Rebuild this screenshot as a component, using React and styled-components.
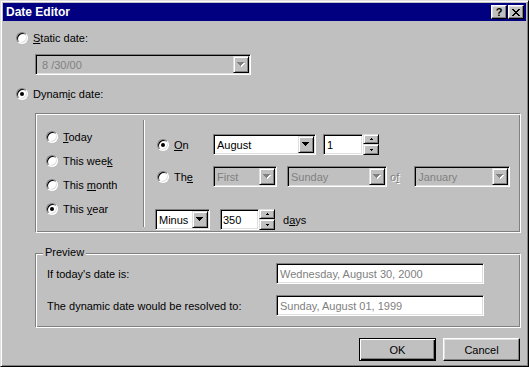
import React from 'react';
import styled, { createGlobalStyle, css } from 'styled-components';

const GlobalStyle = createGlobalStyle`
  html, body { margin: 0; padding: 0; background: #c0c0c0; }
  body {
    font-family: "Liberation Sans", Arial, sans-serif;
    font-size: 11px;
    color: #000;
  }
  * { box-sizing: border-box; }
`;

const raised = css`
  background: #c0c0c0;
  border: 1px solid;
  border-color: #dfdfdf #000 #000 #dfdfdf;
  box-shadow: inset 1px 1px 0 #fff, inset -1px -1px 0 #808080;
`;

const sunken = css`
  border: 1px solid;
  border-color: #808080 #fff #fff #808080;
  box-shadow: inset 1px 1px 0 #000, inset -1px -1px 0 #dfdfdf;
`;

const Window = styled.div`
  width: 529px;
  height: 367px;
  background: #c0c0c0;
  border: 1px solid;
  border-color: #dfdfdf #000 #000 #dfdfdf;
  box-shadow: inset 1px 1px 0 #fff, inset -1px -1px 0 #808080;
  padding: 2px;
  display: flex;
  flex-direction: column;
`;

const TitleBar = styled.div`
  height: 18px;
  background: #000080;
  display: flex;
  align-items: center;
  justify-content: space-between;
  padding: 0 2px 0 3px;
`;

const TitleText = styled.span`
  color: #fff;
  font-weight: bold;
  font-size: 12px;
`;

const CaptionButtons = styled.div`
  display: flex;
  gap: 1px;
`;

const CaptionButton = styled.div`
  width: 16px;
  height: 14px;
  background: #c0c0c0;
  border: 1px solid;
  border-color: #fff #000 #000 #fff;
  box-shadow: inset -1px -1px 0 #808080, inset 1px 1px 0 #dfdfdf;
  display: flex;
  align-items: center;
  justify-content: center;
  font-weight: bold;
  font-size: 11px;
  line-height: 1;
`;

const Body = styled.div`
  display: flex;
  flex-direction: column;
  padding: 0 6px 0 13px;
`;

const RadioRow = styled.div`
  display: flex;
  align-items: center;
  gap: 5px;
  height: ${p => p.$h || 14}px;
  margin-top: ${p => p.$top || 0}px;
  margin-left: ${p => p.$left || 0}px;
  width: ${p => (p.$w ? `${p.$w}px` : 'auto')};
  flex-shrink: 0;
`;

const RadioDot = styled.span`
  position: relative;
  width: 12px;
  height: 12px;
  border-radius: 50%;
  background: #fff;
  border: 1px solid;
  border-color: #808080 #fff #fff #808080;
  box-shadow: inset 1px 1px 0 #000, inset -1px -1px 0 #dfdfdf;
  flex-shrink: 0;
  &::after {
    content: '';
    display: ${p => (p.$checked ? 'block' : 'none')};
    position: absolute;
    left: 3px;
    top: 3px;
    width: 4px;
    height: 4px;
    border-radius: 50%;
    background: #000;
  }
`;

const Label = styled.span`
  white-space: nowrap;
  margin-left: ${p => p.$left || 0}px;
`;

const DimText = styled.span`
  color: #808080;
  text-shadow: 1px 1px 0 #fff;
  margin: 0 ${p => p.$right || 0}px 0 ${p => p.$left || 0}px;
`;

const Field = styled.div`
  display: flex;
  align-items: center;
  width: ${p => p.$w}px;
  height: 21px;
  flex-shrink: 0;
  margin-top: ${p => p.$top || 0}px;
  margin-left: ${p => p.$left || 0}px;
  background: ${p => (p.$disabled ? '#c0c0c0' : '#fff')};
  color: ${p => (p.$dim ? '#808080' : '#000')};
  ${sunken};
  padding: 1px 1px 1px ${p => p.$pad ?? 3}px;
`;

const FieldText = styled.span`
  flex: 1;
  white-space: nowrap;
  overflow: hidden;
`;

const DropButton = styled.div`
  width: 16px;
  height: 17px;
  ${raised};
  display: flex;
  align-items: center;
  justify-content: center;
  flex-shrink: 0;
`;

const SpinBox = styled.div`
  display: flex;
  flex-shrink: 0;
  margin-left: ${p => p.$left || 0}px;
`;

const Spinner = styled.div`
  display: flex;
  flex-direction: column;
  width: 16px;
  height: 21px;
`;

const SpinButton = styled.div`
  ${raised};
  height: ${p => p.$h}px;
  display: flex;
  align-items: center;
  justify-content: center;
`;

const Group = styled.div`
  position: relative;
  display: flex;
  flex-direction: ${p => p.$dir || 'column'};
  width: 486px;
  height: ${p => p.$h}px;
  margin: ${p => p.$top}px 0 0 19px;
  flex-shrink: 0;
  border: 1px solid;
  border-color: #808080 #fff #fff #808080;
  box-shadow: inset 1px 1px 0 #fff, inset -1px -1px 0 #808080;
`;

const Legend = styled.span`
  position: absolute;
  top: -8px;
  left: 7px;
  padding: 0 2px;
  line-height: 13px;
  background: #c0c0c0;
`;

const LeftCol = styled.div`
  width: 107px;
  padding: 11px 0 0 10px;
  display: flex;
  flex-direction: column;
`;

const Separator = styled.div`
  width: 2px;
  margin: 6px 0 5px;
  border-left: 1px solid #808080;
  border-right: 1px solid #fff;
`;

const RightCol = styled.div`
  flex: 1;
  padding: 20px 0 0 10px;
  display: flex;
  flex-direction: column;
`;

const OptionRow = styled.div`
  display: flex;
  align-items: center;
  height: 21px;
  margin-top: ${p => p.$top || 0}px;
`;

const PreviewRow = styled.div`
  display: flex;
  align-items: center;
  height: 21px;
  margin: ${p => p.$top}px 0 0 11px;
`;

const PreviewLabel = styled.span`
  width: 229px;
  white-space: nowrap;
`;

const ButtonRow = styled.div`
  display: flex;
  justify-content: flex-end;
  gap: 7px;
  margin-top: 10px;
`;

const PushButton = styled.div`
  width: 77px;
  height: 23px;
  display: flex;
  align-items: center;
  justify-content: center;
  background: #c0c0c0;
  border: 1px solid;
  border-color: #fff #000 #000 #fff;
  box-shadow: inset -1px -1px 0 #808080, inset 1px 1px 0 #dfdfdf;
  ${p => p.$default && css`
    border-color: #000;
    box-shadow: inset 1px 1px 0 #fff, inset -1px -1px 0 #000, inset -2px -2px 0 #808080;
  `}
`;

function DownArrow({ dim }) {
  return (
    <svg width="8" height="5" viewBox="0 0 8 5" shapeRendering="crispEdges">
      {dim && <path d="M1 1h7v1H1z M2 2h5v1H2z M3 3h3v1H3z M4 4h1v1H4z" fill="#fff" />}
      <path d="M0 0h7v1H0z M1 1h5v1H1z M2 2h3v1H2z M3 3h1v1H3z" fill={dim ? '#808080' : '#000'} />
    </svg>
  );
}

function SpinArrow({ up }) {
  return (
    <svg width="5" height="3" viewBox="0 0 5 3" shapeRendering="crispEdges">
      <path d={up ? 'M2 0h1v1H2z M1 1h3v1H1z' : 'M1 1h3v1H1z M2 2h1v1H2z'} fill="#000" />
    </svg>
  );
}

function CloseGlyph() {
  return (
    <svg width="8" height="7" viewBox="0 0 8 7" shapeRendering="crispEdges">
      <path
        d="M0 0h2v1H0z M6 0h2v1H6z M1 1h2v1H1z M5 1h2v1H5z M2 2h4v1H2z M3 3h2v1H3z M2 4h4v1H2z M1 5h2v1H1z M5 5h2v1H5z M0 6h2v1H0z M6 6h2v1H6z"
        fill="#000"
      />
    </svg>
  );
}

function Radio({ checked, children, ...rest }) {
  return (
    <RadioRow {...rest}>
      <RadioDot $checked={checked} />
      <Label>{children}</Label>
    </RadioRow>
  );
}

function Combo({ value, w, disabled, pad, top, left }) {
  return (
    <Field $w={w} $disabled={disabled} $dim={disabled} $pad={pad} $top={top} $left={left}>
      <FieldText>{value}</FieldText>
      <DropButton>
        <DownArrow dim={disabled} />
      </DropButton>
    </Field>
  );
}

function Spin({ value, w, pad, left }) {
  return (
    <SpinBox $left={left}>
      <Field $w={w} $pad={pad}>
        <FieldText>{value}</FieldText>
      </Field>
      <Spinner>
        <SpinButton $h={10}><SpinArrow up /></SpinButton>
        <SpinButton $h={11}><SpinArrow /></SpinButton>
      </Spinner>
    </SpinBox>
  );
}

export default function App() {
  return (
    <>
      <GlobalStyle />
      <Window>
        <TitleBar>
          <TitleText>Date Editor</TitleText>
          <CaptionButtons>
            <CaptionButton>?</CaptionButton>
            <CaptionButton><CloseGlyph /></CaptionButton>
          </CaptionButtons>
        </TitleBar>

        <Body>
          <Radio $top={10}><u>S</u>tatic date:</Radio>
          <Combo value="8 /30/00" w={216} disabled pad={6} top={9} left={19} />
          <Radio checked $top={12}>Dynam<u>i</u>c date:</Radio>

          <Group $dir="row" $h={120} $top={12}>
            <LeftCol>
              <Radio $h={24}><u>T</u>oday</Radio>
              <Radio $h={24}>This wee<u>k</u></Radio>
              <Radio $h={24}>This <u>m</u>onth</Radio>
              <Radio $h={24} checked>This <u>y</u>ear</Radio>
            </LeftCol>
            <Separator />
            <RightCol>
              <OptionRow>
                <Radio checked $w={56} $left={2}><u>O</u>n</Radio>
                <Combo value="August" w={103} />
                <Spin value="1" w={40} pad={3} left={7} />
              </OptionRow>
              <OptionRow $top={11}>
                <Radio $w={56} $left={2}>Th<u>e</u></Radio>
                <Combo value="First" w={64} disabled />
                <Combo value="Sunday" w={100} disabled left={10} />
                <DimText $left={3} $right={15}>o<u>f</u></DimText>
                <Combo value="January" w={96} disabled />
              </OptionRow>
              <OptionRow $top={22}>
                <Combo value="Minus" w={55} />
                <Spin value="350" w={39} pad={2} left={10} />
                <Label $left={8}>d<u>a</u>ys</Label>
              </OptionRow>
            </RightCol>
          </Group>

          <Group $h={75} $top={20}>
            <Legend>Preview</Legend>
            <PreviewRow $top={9}>
              <PreviewLabel>If today's date is:</PreviewLabel>
              <Field $w={208} $dim>
                <FieldText>Wednesday, August 30, 2000</FieldText>
              </Field>
            </PreviewRow>
            <PreviewRow $top={11}>
              <PreviewLabel>The dynamic date would be resolved to:</PreviewLabel>
              <Field $w={208} $dim>
                <FieldText>Sunday, August 01, 1999</FieldText>
              </Field>
            </PreviewRow>
          </Group>

          <ButtonRow>
            <PushButton $default>OK</PushButton>
            <PushButton>Cancel</PushButton>
          </ButtonRow>
        </Body>
      </Window>
    </>
  );
}
